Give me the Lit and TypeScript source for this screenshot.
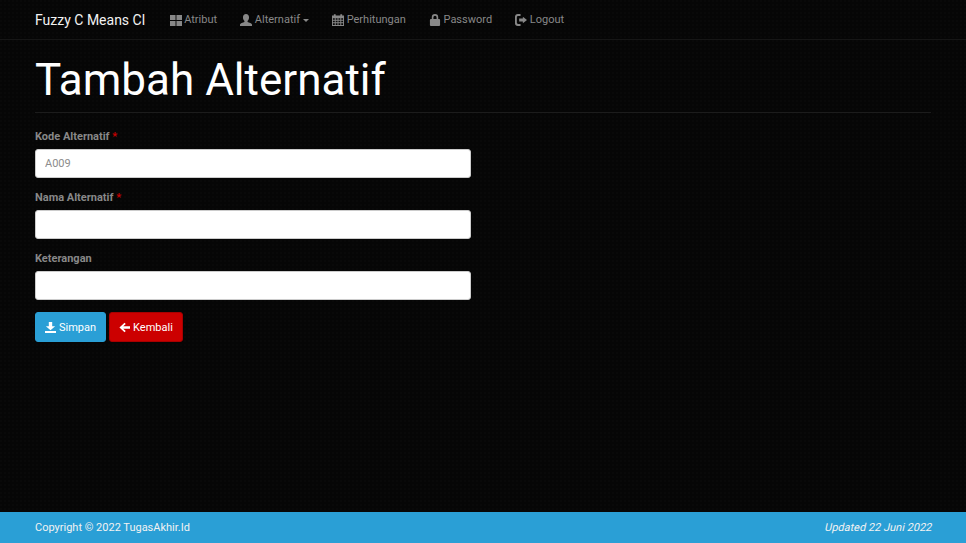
import { LitElement, html, css, svg } from "lit";
import { customElement } from "lit/decorators.js";

const icons = {
  grid: svg`<path d="M0 1h6v5.500H0zM7 1h6v5.500H7zM0 7.500h6V13H0zM7 7.500h6V13H7z"/>`,
  user: svg`<path d="M6.500 0C8.600 0 9.800 1.600 9.800 3.700c0 1.500-.7 3-1.600 3.800v1.200c1.600.6 4.800 1.300 4.800 2.700V13H0v-1.600c0-1.400 3.200-2.100 4.800-2.700V7.500C3.900 6.700 3.200 5.200 3.200 3.700 3.200 1.600 4.400 0 6.500 0z"/>`,
  cal: svg`<path fill-rule="evenodd" d="M0 1.500h2V.2h2v1.300h5V.2h2v1.300h2V13H0zM1 4.500v1.800h2V4.500zm3 0v1.800h2V4.500zm3 0v1.800h2V4.500zm3 0v1.800h2V4.500zM1 7.200V9h2V7.200zm3 0V9h2V7.200zm3 0V9h2V7.200zm3 0V9h2V7.200zM1 10v2h2v-2zm3 0v2h2v-2zm3 0v2h2v-2zm3 0v2h2v-2z"/>`,
  lock: svg`<path fill-rule="evenodd" d="M3 5.500V3.600a3.500 3.500 0 0 1 7 0v1.900h1c.6 0 1 .4 1 1V12c0 .6-.4 1-1 1H2c-.6 0-1-.4-1-1V6.500c0-.6.4-1 1-1zM4.800 5.500h3.400V3.600a1.700 1.700 0 0 0-3.400 0z"/>`,
  out: svg`<path d="M6 2.300H3.500C2.500 2.300 2 2.900 2 3.800v5.400c0 .9.500 1.500 1.500 1.500H6V13H3C1.200 13 0 11.800 0 10V3c0-1.800 1.200-3 3-3h3zM8.500 3 13 6.500 8.500 10V8H4.500V5h4z"/>`,
  save: svg`<path d="M4.500 0h4v5H12L6.500 9.800 1 5h3.500zM0 10.500h13V13H0z"/>`,
  back: svg`<path d="M6.500 1 8 2.500 5 5h8v3H5L8 10.500 6.500 12 .5 6.500z"/>`,
};

@customElement("app-root")
export class AppRoot extends LitElement {
  static styles = css`
    :host {
      display: flex;
      flex-direction: column;
      min-height: 543px;
      background-color: #060606;
      background-image: radial-gradient(circle at 1px 1px, #090909 0 1px, transparent 1px);
      background-size: 4px 4px;
      font-family: Roboto, sans-serif;
      font-size: 11px;
      color: #fff;
    }
    * { box-sizing: border-box; }
    .navbar {
      height: 40px;
      border-bottom: 1px solid #161616;
      padding: 0 35px;
      display: flex;
      align-items: center;
    }
    .brand { width: 134.700px; font-size: 14px; color: #f2f2f2; white-space: nowrap; }
    .nav { display: flex; align-items: center; gap: 23.200px; }
    .nav a {
      display: flex;
      align-items: center;
      gap: 3px;
      color: #888;
      font-size: 11px;
      white-space: nowrap;
    }
    .nav svg { width: 12px; height: 12px; margin-right: -.5px; fill: #888; flex: none; }
    .caret {
      width: 0; height: 0; margin-top: 1px;
      border-left: 3.500px solid transparent;
      border-right: 3.500px solid transparent;
      border-top: 3.500px solid #888;
    }
    main { flex: 1; padding: 0 35px; }
    h1 {
      margin: 0;
      padding: 10px 0 2px;
      font-size: 44px;
      font-weight: 400;
      line-height: 60px;
      color: #fff;
      border-bottom: 1px solid #1c1c1c;
    }
    form { width: 436px; margin-top: 17px; display: flex; flex-direction: column; gap: 13px; }
    .group { display: flex; flex-direction: column; gap: 5px; }
    label { font-size: 11px; font-weight: 700; color: #888; line-height: 14px; }
    .req { color: #c80000; }
    .field {
      height: 29px;
      padding: 0 9px;
      border: 1px solid #ccc;
      border-radius: 3px;
      background: #fff;
      color: #8c8c8c;
      font: 11px Roboto, sans-serif;
      width: 100%;
      outline: none;
    }
    .actions { display: flex; gap: 3px; margin-top: -1px; }
    button {
      display: flex;
      align-items: center;
      gap: 3px;
      height: 30px;
      padding: 0 9px;
      border-radius: 3px;
      color: #fff;
      font: 11px Roboto, sans-serif;
      border: 1px solid;
    }
    button svg { width: 11px; height: 11px; fill: #fff; flex: none; }
    .save { background: #2a9fd6; border-color: #2a9fd6; }
    .back { background: #cc0000; border-color: #a80000; }
    footer {
      height: 31px;
      background: #2a9fd6;
      padding: 0 34px 0 35px;
      display: flex;
      align-items: center;
      justify-content: space-between;
      font-size: 11px;
      color: #f2f2f2;
    }
    .updated { display: inline-block; transform: skewX(-12deg); }
  `;

  icon(p: unknown) {
    return html`<svg viewBox="0 0 13 13" aria-hidden="true">${p}</svg>`;
  }

  render() {
    return html`
      <nav class="navbar">
        <span class="brand">Fuzzy C Means Cl</span>
        <div class="nav">
          <a>${this.icon(icons.grid)}Atribut</a>
          <a>${this.icon(icons.user)}Alternatif<span class="caret"></span></a>
          <a>${this.icon(icons.cal)}Perhitungan</a>
          <a>${this.icon(icons.lock)}Password</a>
          <a>${this.icon(icons.out)}Logout</a>
        </div>
      </nav>
      <main>
        <h1>Tambah Alternatif</h1>
        <form>
          <div class="group">
            <label>Kode Alternatif <span class="req">*</span></label>
            <input class="field" value="A009" />
          </div>
          <div class="group">
            <label>Nama Alternatif <span class="req">*</span></label>
            <input class="field" />
          </div>
          <div class="group">
            <label>Keterangan</label>
            <input class="field" />
          </div>
          <div class="actions">
            <button type="button" class="save">${this.icon(icons.save)}Simpan</button>
            <button type="button" class="back">${this.icon(icons.back)}Kembali</button>
          </div>
        </form>
      </main>
      <footer>
        <span>Copyright © 2022 TugasAkhir.Id</span>
        <span class="updated">Updated 22 Juni 2022</span>
      </footer>
    `;
  }
}
